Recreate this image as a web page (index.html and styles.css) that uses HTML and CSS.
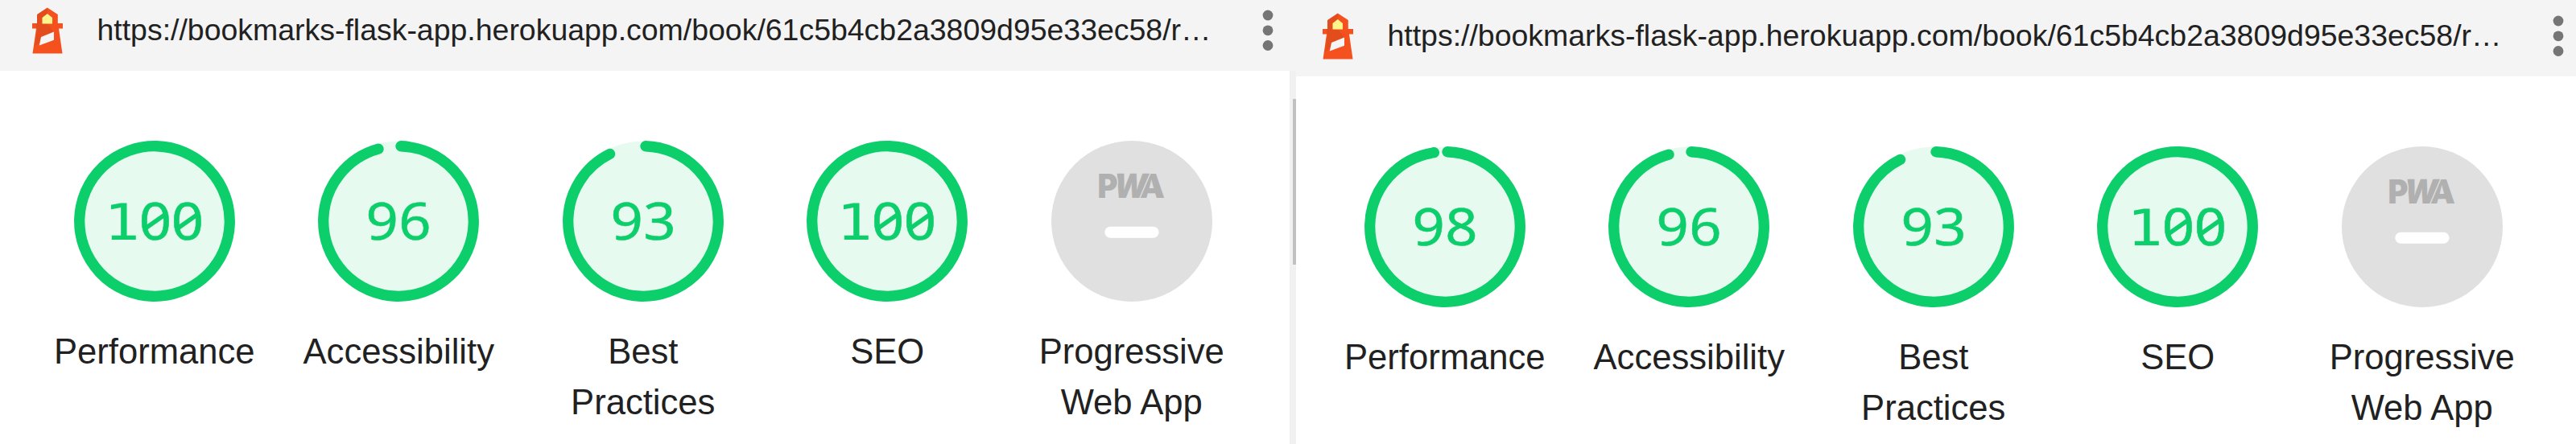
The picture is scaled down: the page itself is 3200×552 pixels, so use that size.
FILE: index.html
```html
<!DOCTYPE html>
<html lang="en">
<head>
<meta charset="utf-8">
<title>Lighthouse reports</title>
<link rel="stylesheet" href="styles.css">
</head>
<body>
<svg class="defs" aria-hidden="true">
  <symbol id="lighthouse" viewBox="0 0 38 58">
    <path fill="#f4511e" d="M18.800 .5 31.800 9v11H38v6.500h-5l4.500 31H.5L5 26.500H0V20h6V9z"/>
    <path fill="#212121" fill-opacity=".08" d="M18.800 .5v19.500L27 30.500 3 48.500 6.200 26.500H5V20h1V9z"/>
    <path fill="#fff58a" d="M18.800 8 25 13v7.500H12.500V13z"/>
    <path fill="#f5f5f5" d="m11 37 16-6.500v10.300L8.800 47.500z"/>
  </symbol>
  <symbol id="menu" viewBox="0 0 14 52">
    <g fill="#757575"><circle cx="7" cy="7" r="6.400"/><circle cx="7" cy="25.800" r="6.400"/><circle cx="7" cy="44.500" r="6.400"/></g>
  </symbol>
  <symbol id="slash" viewBox="-20 -23 40 46">
    <path d="M-13.500 9.700 13.500-9.300" fill="none" stroke="#0cce6b" stroke-width="5.500"/>
  </symbol>
</svg>
<main class="reports">
  <section class="report report-first">
    <header class="topbar">
      <svg class="logo"><use href="#lighthouse"/></svg>
      <span class="url">https://bookmarks-flask-app.herokuapp.com/book/61c5b4cb2a3809d95e33ec58/r…</span>
      <svg class="menu"><use href="#menu"/></svg>
    </header>
    <div class="body">
      <div class="gauges">
        <div class="gauge">
          <svg class="dial" viewBox="-100 -100 200 200"><circle class="disc" r="99.500"/><circle class="arc" r="93.300"/><text class="one" transform="translate(-40.500 23) scale(1.200 1)">1</text><g transform="scale(1.120 1)"><text class="score" x="0.800 36.600" y="22.500">00</text></g><use href="#slash" x="-19.100" y="-23" width="40" height="46"/><use href="#slash" x="21" y="-23" width="40" height="46"/></svg>
          <span class="label">Performance</span>
        </div>
        <div class="gauge">
          <svg class="dial" viewBox="-100 -100 200 200"><circle class="disc" r="99.500"/><circle class="arc" r="93.300" pathLength="360" stroke-dasharray="342.600 360"/><g transform="scale(1.120 1)"><text class="score" x="-18.200 18.200" y="22.500">96</text></g></svg>
          <span class="label">Accessibility</span>
        </div>
        <div class="gauge">
          <svg class="dial" viewBox="-100 -100 200 200"><circle class="disc" r="99.500"/><circle class="arc" r="93.300" pathLength="360" stroke-dasharray="331.800 360"/><g transform="scale(1.120 1)"><text class="score" x="-18.200 18.200" y="22.500">93</text></g></svg>
          <span class="label">Best<br>Practices</span>
        </div>
        <div class="gauge">
          <svg class="dial" viewBox="-100 -100 200 200"><circle class="disc" r="99.500"/><circle class="arc" r="93.300"/><text class="one" transform="translate(-40.500 23) scale(1.200 1)">1</text><g transform="scale(1.120 1)"><text class="score" x="0.800 36.600" y="22.500">00</text></g><use href="#slash" x="-19.100" y="-23" width="40" height="46"/><use href="#slash" x="21" y="-23" width="40" height="46"/></svg>
          <span class="label">SEO</span>
        </div>
        <div class="gauge">
          <svg class="dial" viewBox="-100 -100 200 200"><circle class="disc-off" r="100"/><text class="pwa" x="8" y="-29.400">A</text><text class="pwa pwa-halo" transform="translate(-24.500 -29.400) skewX(-10)" textLength="42" lengthAdjust="spacingAndGlyphs">W</text><text class="pwa pwa-halo" x="-42.500" y="-29.400" textLength="25" lengthAdjust="spacingAndGlyphs">P</text><rect x="-33.700" y="6.700" width="67.300" height="14" rx="7" fill="#fff"/></svg>
          <span class="label">Progressive<br>Web App</span>
        </div>
      </div>
      <div class="scrollbar"><div class="thumb"></div></div>
    </div>
  </section>
  <section class="report report-second">
    <header class="topbar">
      <svg class="logo"><use href="#lighthouse"/></svg>
      <span class="url">https://bookmarks-flask-app.herokuapp.com/book/61c5b4cb2a3809d95e33ec58/r…</span>
      <svg class="menu"><use href="#menu"/></svg>
    </header>
    <div class="body">
      <div class="gauges">
        <div class="gauge">
          <svg class="dial" viewBox="-100 -100 200 200"><circle class="disc" r="99.500"/><circle class="arc" r="93.300" pathLength="360" stroke-dasharray="349.800 360"/><g transform="scale(1.120 1)"><text class="score" x="-18.200 18.200" y="22.500">98</text></g></svg>
          <span class="label">Performance</span>
        </div>
        <div class="gauge">
          <svg class="dial" viewBox="-100 -100 200 200"><circle class="disc" r="99.500"/><circle class="arc" r="93.300" pathLength="360" stroke-dasharray="342.600 360"/><g transform="scale(1.120 1)"><text class="score" x="-18.200 18.200" y="22.500">96</text></g></svg>
          <span class="label">Accessibility</span>
        </div>
        <div class="gauge">
          <svg class="dial" viewBox="-100 -100 200 200"><circle class="disc" r="99.500"/><circle class="arc" r="93.300" pathLength="360" stroke-dasharray="331.800 360"/><g transform="scale(1.120 1)"><text class="score" x="-18.200 18.200" y="22.500">93</text></g></svg>
          <span class="label">Best<br>Practices</span>
        </div>
        <div class="gauge">
          <svg class="dial" viewBox="-100 -100 200 200"><circle class="disc" r="99.500"/><circle class="arc" r="93.300"/><text class="one" transform="translate(-40.500 23) scale(1.200 1)">1</text><g transform="scale(1.120 1)"><text class="score" x="0.800 36.600" y="22.500">00</text></g><use href="#slash" x="-19.100" y="-23" width="40" height="46"/><use href="#slash" x="21" y="-23" width="40" height="46"/></svg>
          <span class="label">SEO</span>
        </div>
        <div class="gauge">
          <svg class="dial" viewBox="-100 -100 200 200"><circle class="disc-off" r="100"/><text class="pwa" x="8" y="-29.400">A</text><text class="pwa pwa-halo" transform="translate(-24.500 -29.400) skewX(-10)" textLength="42" lengthAdjust="spacingAndGlyphs">W</text><text class="pwa pwa-halo" x="-42.500" y="-29.400" textLength="25" lengthAdjust="spacingAndGlyphs">P</text><rect x="-33.700" y="6.700" width="67.300" height="14" rx="7" fill="#fff"/></svg>
          <span class="label">Progressive<br>Web App</span>
        </div>
      </div>
    </div>
  </section>
</main>
</body>
</html>
```
FILE: styles.css
```css
* { box-sizing: border-box; }
body {
  margin: 0;
  background: #fff;
  color: #212121;
  font-family: "Liberation Sans", Arial, sans-serif;
}
.defs { display: none; }
.reports { display: flex; height: 552px; overflow: hidden; }
.report { display: flex; flex-direction: column; height: 552px; }
.report-first { width: 1610px; }
.report-second { width: 1590px; }

.topbar {
  display: flex;
  align-items: flex-start;
  flex: none;
  height: 88px;
  padding: 9px 0 0 39.500px;
  background: #f4f4f4;
}
.report-second .topbar { height: 95px; padding: 16px 0 0 32.500px; }
.logo { width: 38px; height: 58px; flex: none; }
.url {
  width: 1445px;
  margin-left: 43px;
  padding-top: 7px;
  font-size: 37.450px;
  line-height: 43px;
  white-space: nowrap;
}
.menu { width: 14px; height: 52px; flex: none; margin: 3px 0 0 2px; }

.body { display: flex; flex: 1; }
.gauges {
  display: grid;
  grid-template-columns: repeat(5, 303.500px);
  flex: 1;
  padding: 87px 0 0 40px;
}
.report-second .gauges { padding-left: 33px; }
.gauge { display: flex; flex-direction: column; align-items: center; }
.dial { width: 200px; height: 200px; }
.disc { fill: #e6faf0; }
.disc-off { fill: #e0e0e0; }
.arc {
  fill: none;
  stroke: #0cce6b;
  stroke-width: 13.300px;
  stroke-linecap: round;
  transform: rotate(-88.200deg);
}
.score, .one {
  fill: #0cce6b;
  stroke: #0cce6b;
  stroke-width: 0.500px;
  text-anchor: middle;
}
.score { font-family: "Noto Sans", sans-serif; font-size: 63px; }
.one { font-family: "DejaVu Sans Mono", monospace; font-size: 62px; stroke-width: 0; }
.pwa {
  font-family: Inter, sans-serif;
  font-size: 41.500px;
  font-weight: 900;
  fill: #b0b0b0;
}
.pwa-halo { stroke: #e0e0e0; stroke-width: 3px; paint-order: stroke; }
.label {
  margin-top: 31px;
  font-size: 43.600px;
  line-height: 62.500px;
  text-align: center;
  white-space: nowrap;
}
.scrollbar { width: 8px; padding: 35px 0 0 4px; background: #f1f1f1; }
.thumb { height: 206px; background: #c1c1c1; }
```
